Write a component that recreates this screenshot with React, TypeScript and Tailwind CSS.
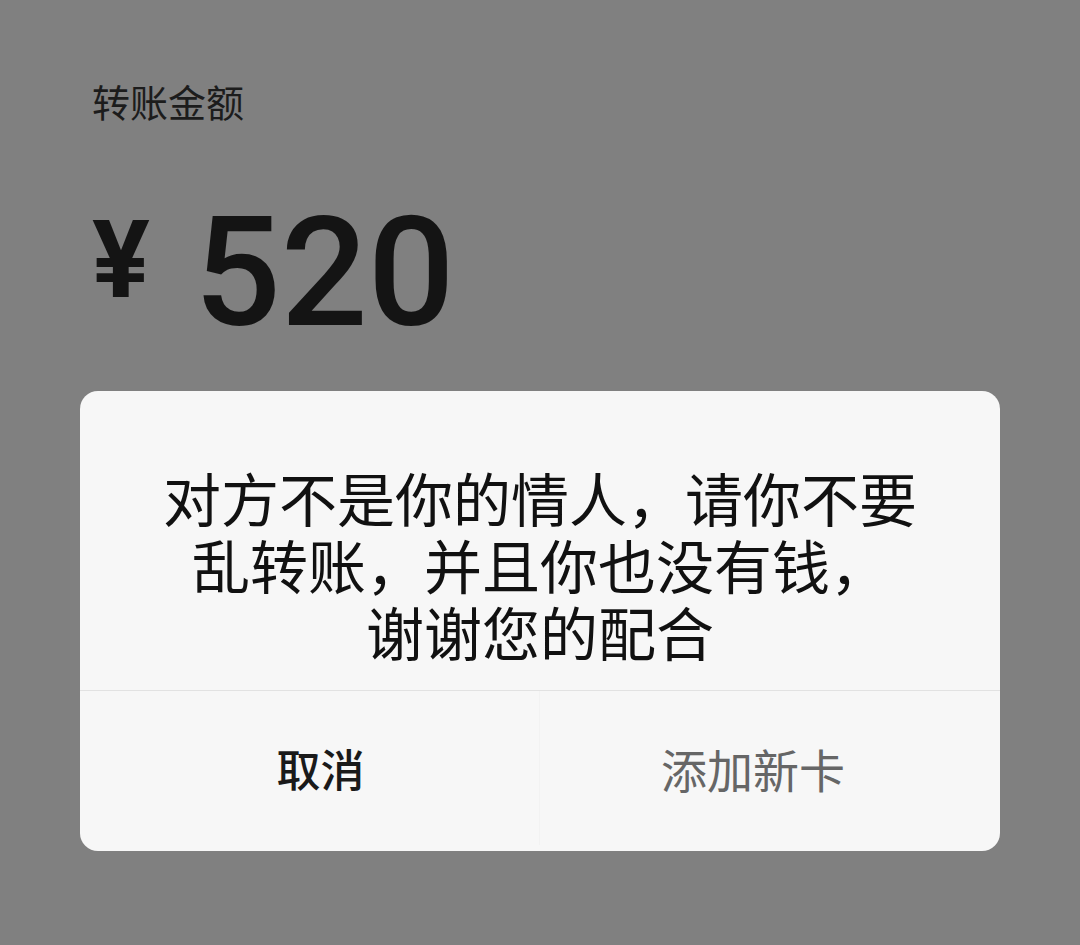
import React from 'react';

const cjk = { fontFamily: '"Noto Sans CJK SC", "Noto Sans", sans-serif' };
const num = { fontFamily: 'Roboto, "Liberation Sans", sans-serif' };

export default function App() {
  return (
    <div className="h-[945px] w-[1080px] overflow-hidden bg-[#808080]">
      {/* Transfer amount header */}
      <div className="pl-[92px] pt-[82px]">
        <div className="text-[38px] leading-none text-[#1c1c1c]" style={cjk}>
          转账金额
        </div>
        <div className="mt-[72px] flex h-[162px] items-start" style={num}>
          <span className="mt-[14px] text-[108px] font-bold leading-none text-[#141414]">¥</span>
          <span className="ml-[44px] mt-[4px] text-[153px] font-medium leading-none text-[#141414]">
            520
          </span>
        </div>
      </div>

      {/* Alert dialog */}
      <div className="mx-[80px] mt-[37px] overflow-hidden rounded-[18px] bg-[#f7f7f7]" style={cjk}>
        <div className="pb-[25px] pt-[73px] text-center text-[58px] leading-[67px] text-[#111111]">
          <div>对方不是你的情人，请你不要</div>
          <div>乱转账，并且你也没有钱，</div>
          <div>谢谢您的配合</div>
        </div>
        <div className="h-px bg-[#e2e2e2]" />
        <div className="grid h-[160px] grid-cols-2 pb-[6px]">
          <button className="flex items-center justify-center border-r border-[#f2f2f2]">
            <span className="ml-[22px] text-[44px] font-medium text-[#1a1a1a]">取消</span>
          </button>
          <button className="flex items-center justify-center">
            <span className="mr-[34px] text-[46px] text-[#666666]">添加新卡</span>
          </button>
        </div>
      </div>
    </div>
  );
}
